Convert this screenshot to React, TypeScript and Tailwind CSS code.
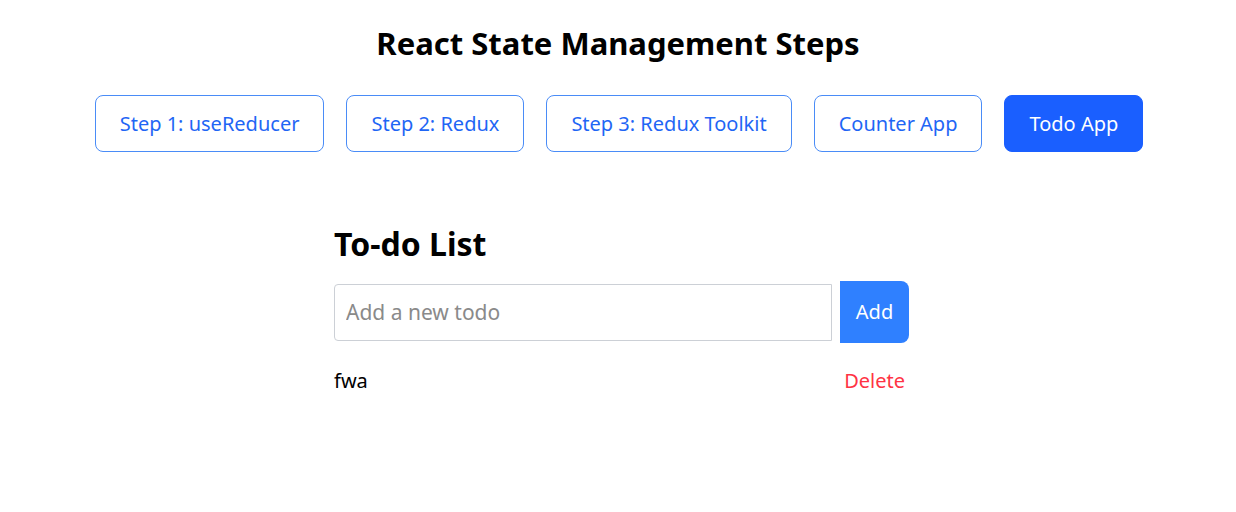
import { useState } from 'react'

const STEPS = ['Step 1: useReducer', 'Step 2: Redux', 'Step 3: Redux Toolkit', 'Counter App', 'Todo App']

export default function App() {
  const [active, setActive] = useState('Todo App')
  const [todos, setTodos] = useState([{ id: 1, text: 'fwa' }])
  const [text, setText] = useState('')

  function handleAdd() {
    if (!text.trim()) return
    setTodos([...todos, { id: Date.now(), text: text.trim() }])
    setText('')
  }

  return (
    <div className="min-h-[512px] bg-white text-black" style={{ fontFamily: '"Noto Sans", "Open Sans", sans-serif' }}>
      <h1 className="pt-[21px] text-center text-[31px] font-bold leading-[44px]">React State Management Steps</h1>

      {/* Nav */}
      <div className="mt-[30px] flex justify-center gap-[22px] pl-[2px]">
        {STEPS.map((s) => (
          <button
            key={s}
            onClick={() => setActive(s)}
            className={`h-[57px] rounded-[8px] border px-[24px] text-[20px] ${
              active === s
                ? 'border-[#1a5fff] bg-[#1a5fff] text-white'
                : 'border-[#4a8cf7] bg-white text-[#1f66f5]'
            }`}
          >
            {s}
          </button>
        ))}
      </div>

      {/* Todo */}
      <div className="ml-[334px] mt-[70px] w-[575px]">
        <h2 className="text-[32px] font-bold leading-[44px]">To-do List</h2>
        <div className="mt-[15px] flex items-center">
          <input
            value={text}
            onChange={(e) => setText(e.target.value)}
            placeholder="Add a new todo"
            className="h-[57px] w-[498px] rounded-l-[4px] border border-[#ccd0d6] px-[11px] text-[21px] outline-none placeholder:text-[#8a8a8a]"
          />
          <button
            onClick={handleAdd}
            className="ml-[8px] h-[62px] w-[69px] rounded-r-[8px] bg-[#2f80ff] text-[20px] text-white"
          >
            Add
          </button>
        </div>
        <ul className="mt-[22px]">
          {todos.map((t) => (
            <li key={t.id} className="flex items-center justify-between text-[20px] leading-[32px]">
              <span>{t.text}</span>
              <button
                onClick={() => setTodos(todos.filter((x) => x.id !== t.id))}
                className="pr-[4px] text-[#ff3344]"
              >
                Delete
              </button>
            </li>
          ))}
        </ul>
      </div>
    </div>
  )
}
